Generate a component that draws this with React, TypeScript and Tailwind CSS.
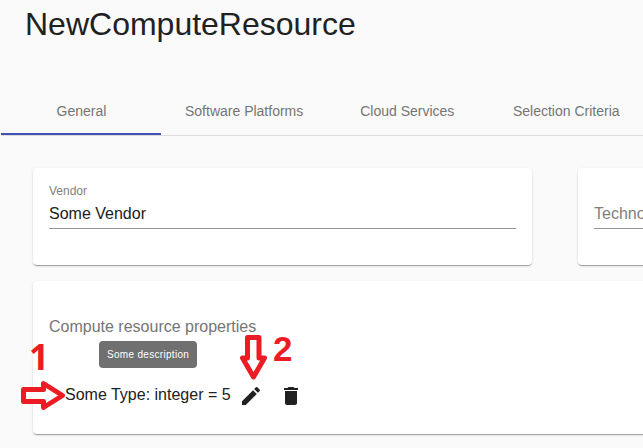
import type { ReactNode } from "react";

const cardShadow =
  "shadow-[0_2px_1px_-1px_rgba(0,0,0,0.2),0_1px_1px_0_rgba(0,0,0,0.14),0_1px_3px_0_rgba(0,0,0,0.12)]";

const tabs = ["General", "Software Platforms", "Cloud Services", "Selection Criteria"];

function Card({ className, children }: { className: string; children: ReactNode }) {
  return <section className={`shrink-0 rounded bg-white px-4 ${cardShadow} ${className}`}>{children}</section>;
}

function Tabs() {
  return (
    <nav className="ml-px mt-[39px] flex h-[49px] border-b border-[#dcdcdc]">
      {tabs.map((tab, i) => (
        <button
          key={tab}
          className={`h-12 min-w-40 shrink-0 whitespace-nowrap text-sm font-normal text-[#757575] ${
            i === 0 ? "border-b-2 border-[#3f51b5] pt-0.5 pl-6 pr-[23px]" : i === 3 ? "pl-6 pr-[26px]" : "px-6"
          }`}
        >
          {tab}
        </button>
      ))}
    </nav>
  );
}

function PropertyRow() {
  return (
    <div className="relative ml-4 mt-11 flex h-6 items-center">
      <span className="w-[174px] whitespace-nowrap text-base leading-6">Some Type: integer = 5</span>
      <svg viewBox="0 0 24 24" className="mt-0.5 size-6 shrink-0 fill-[#212121]">
        <path d="M3 17.25V21h3.75L17.81 9.94l-3.75-3.75L3 17.25zM20.71 7.04a1 1 0 0 0 0-1.41l-2.34-2.34a1 1 0 0 0-1.41 0l-1.83 1.83 3.75 3.75 1.83-1.83z" />
      </svg>
      <svg viewBox="0 0 24 24" className="ml-4 mt-0.5 size-6 shrink-0 fill-[#212121]">
        <path d="M6 19c0 1.1.9 2 2 2h8c1.1 0 2-.9 2-2V7H6v12zM19 4h-3.500l-1-1h-5l-1 1H5v2h14V4z" />
      </svg>
      <div className="absolute left-[34px] top-[-42px] flex h-[27px] w-[98px] items-center whitespace-nowrap rounded bg-[#707070] px-2 text-[10px] tracking-[0.31px] text-white">
        Some description
      </div>
    </div>
  );
}

function Annotations() {
  return (
    <div className="pointer-events-none absolute inset-0 font-bold text-[#ed1c24]">
      <span className="absolute left-[29px] top-[337px] font-['Open_Sans',sans-serif] text-[35px] leading-10">1</span>
      <span className="absolute left-[273px] top-[329px] text-[35px] leading-10">2</span>
      <svg viewBox="0 0 643 448" className="absolute inset-0 h-full w-full" fill="white" stroke="#ed1c24" strokeWidth="5" strokeLinejoin="round">
        <path d="M23.500 389.500H43.500V383.500L62.500 395.500L43.500 407.500V401.500H23.500Z" />
        <path d="M247.500 337.500H259V358H264.500L253.500 377L242.500 358H247.500Z" />
      </svg>
    </div>
  );
}

export default function App() {
  return (
    <main className="relative h-[448px] w-[643px] overflow-hidden bg-[#fafafa] font-['Liberation_Sans',Arial,sans-serif] text-[#212121]">
      <h1 className="ml-[25px] h-12 text-[32px] leading-[48px]">NewComputeResource</h1>
      <Tabs />
      <div className="ml-[33px] mt-8 flex gap-[46px]">
        <Card className="h-[97px] w-[499px] pt-4">
          <div className="h-[45px] border-b border-[#949494]">
            <label className="block text-xs leading-[14px] text-[#808080]">Vendor</label>
            <div className="mt-1.5 text-base leading-5">Some Vendor</div>
          </div>
        </Card>
        <Card className="h-[97px] w-[499px] pt-4">
          <div className="h-[45px] border-b border-[#949494] pt-5 text-base leading-5 text-[#808080]">
            Technology
          </div>
        </Card>
      </div>
      <Card className="ml-[33px] mt-4 h-[153px] w-[1044px] pt-[34px]">
        <h2 className="text-base leading-6 text-[#757575]">Compute resource properties</h2>
        <PropertyRow />
      </Card>
      <Annotations />
    </main>
  );
}
